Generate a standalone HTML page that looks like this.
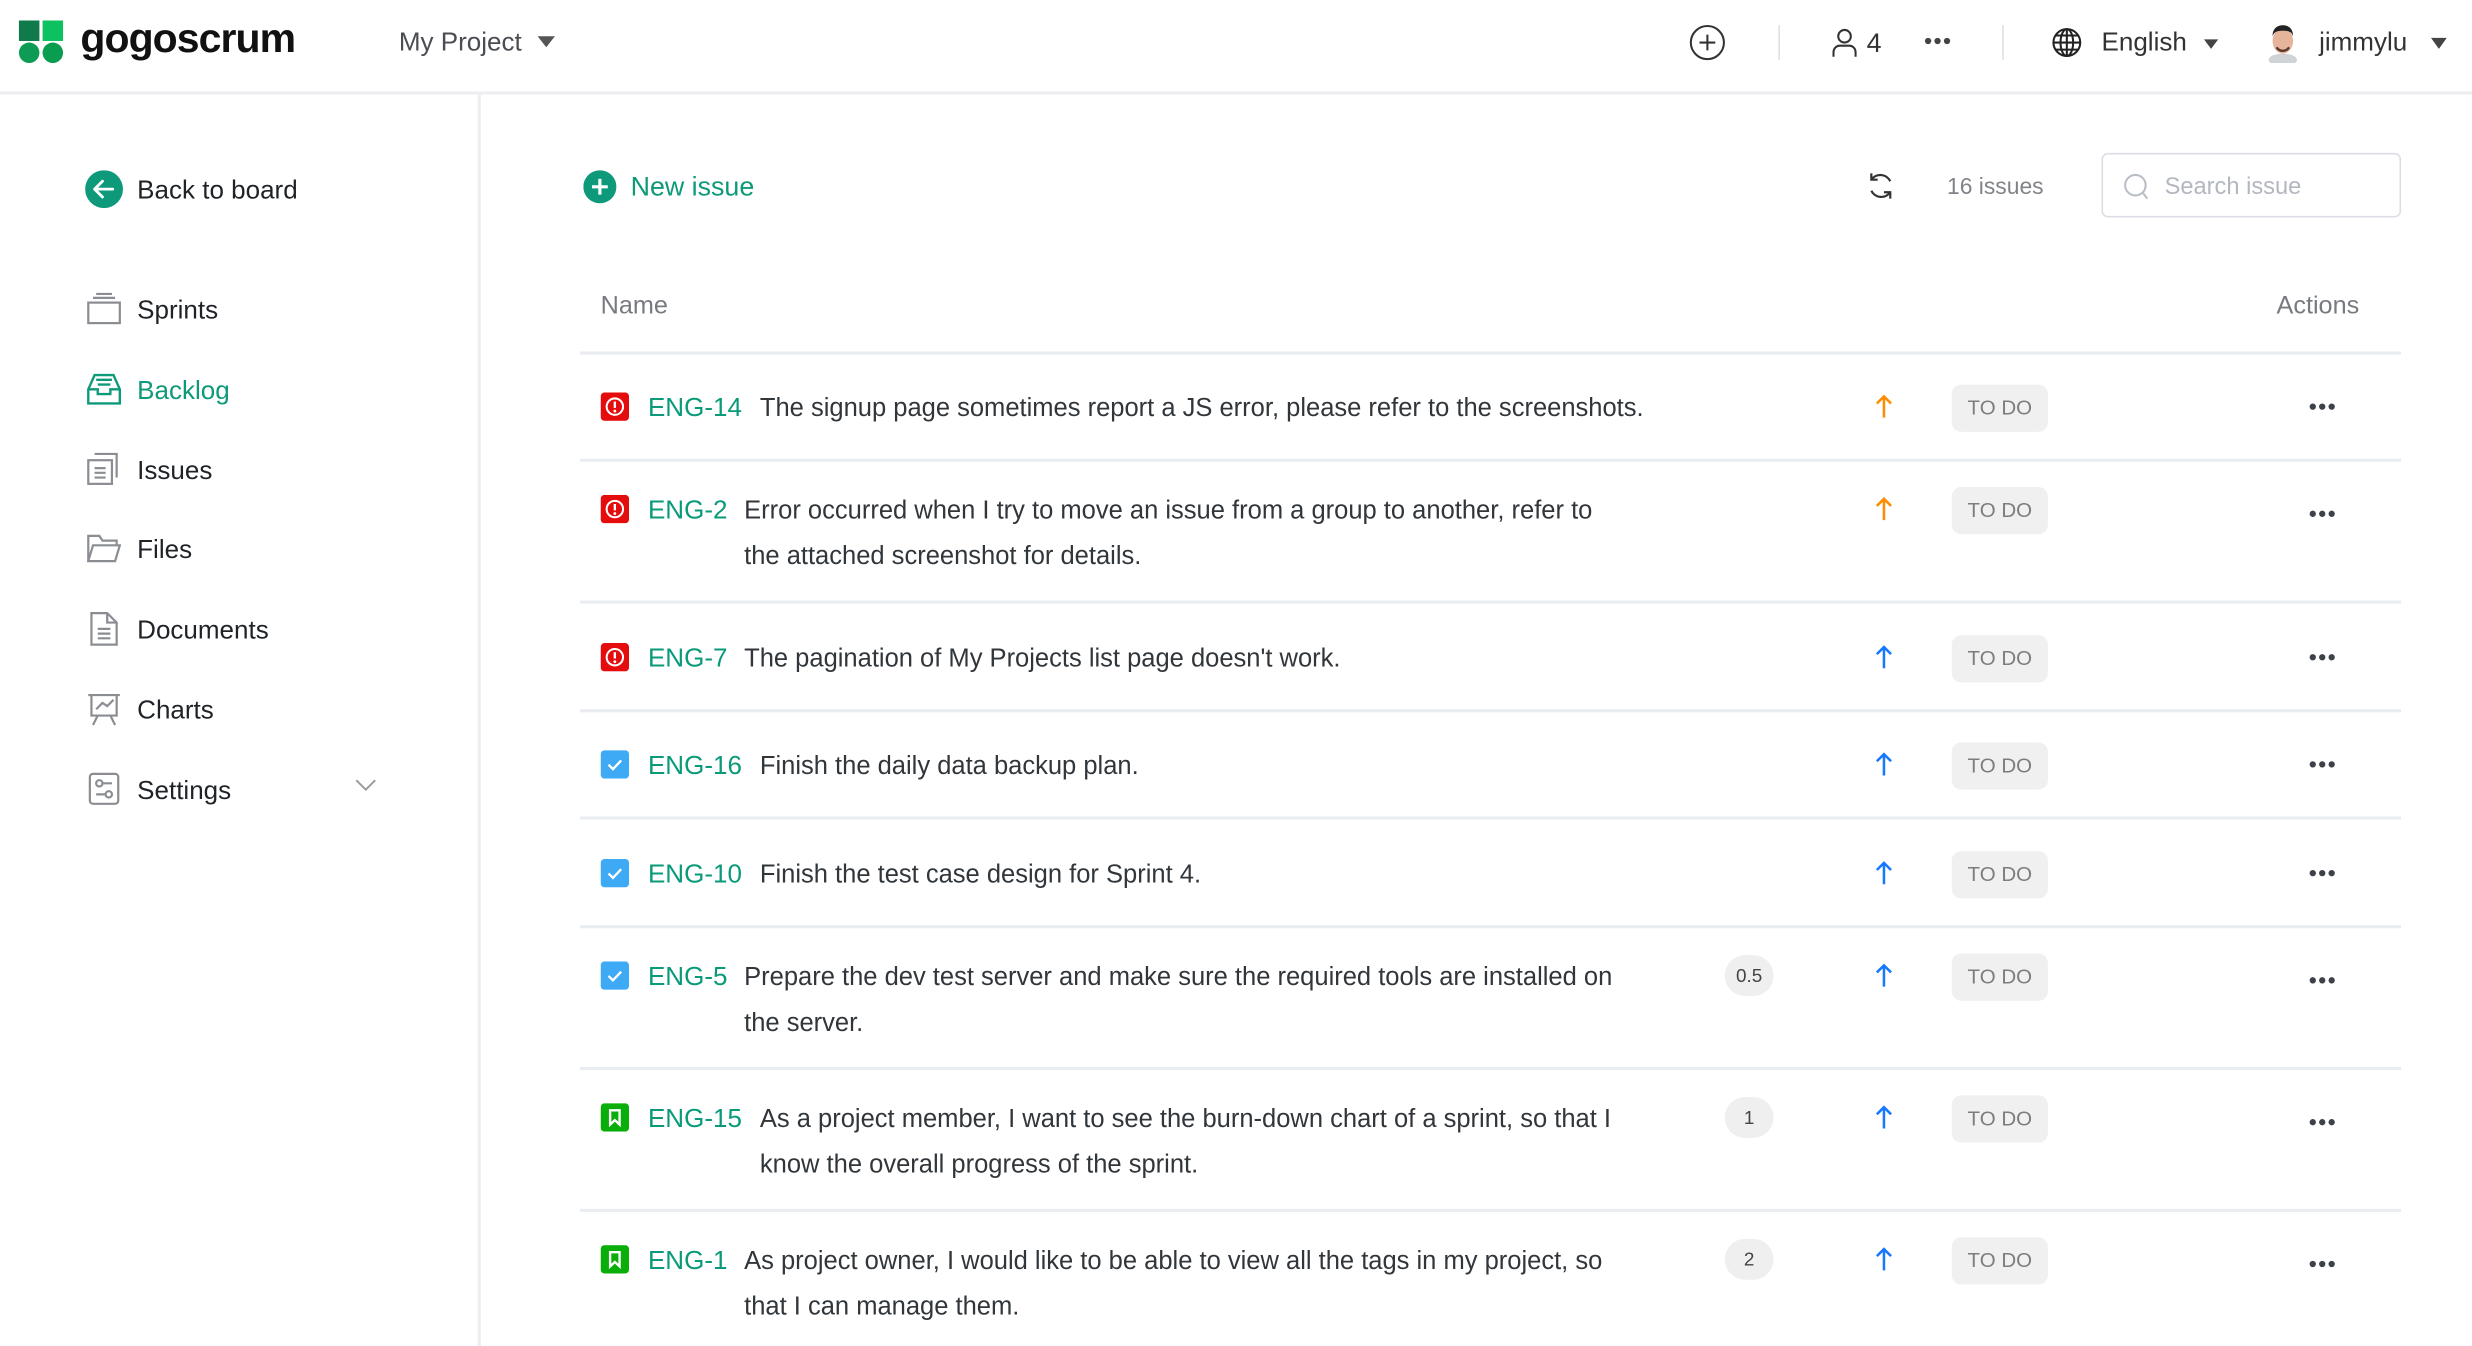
<!DOCTYPE html>
<html><head><meta charset="utf-8">
<style>
html,body{margin:0;padding:0;background:#fff;overflow:hidden;width:2472px;height:1346px}
#w{position:absolute;left:0;top:0;width:1568px;height:854px;transform:scale(1.57653,1.5761);transform-origin:0 0;font-family:"Liberation Sans",sans-serif;color:#2b2f33}
.a{position:absolute;white-space:nowrap}
.t{font-size:16.2px;line-height:29px;color:#31363b}
.id{font-size:16.5px;line-height:29px;color:#0a9a7a}
.hl{position:absolute;height:2px;background:#e9ecf0;left:368px;width:1155px}
.todo{position:absolute;left:1238px;width:61px;height:30px;border-radius:6px;background:#f0f0f0;color:#7d7d7d;font-size:13px;line-height:30px;text-align:center}
.dots{position:absolute;left:1464px;width:18px;height:10px}
.pt{position:absolute;left:1094px;width:31px;height:26px;border-radius:13px;background:#efefef;color:#444;font-size:12px;line-height:26px;text-align:center}
.nav{position:absolute;left:87px;font-size:16.5px;line-height:20px;color:#1f2327}
.ic{position:absolute;left:55px}
</style></head><body><div id="w">
<div style="position:absolute;left:0;top:58px;width:1568px;height:2px;background:#eceef1"></div>
<div class="a" style="left:12px;top:13px;width:13px;height:13px;background:#107a4b"></div>
<div class="a" style="left:27px;top:13px;width:13px;height:13px;background:#0cc15f"></div>
<div class="a" style="left:12px;top:27px;width:13px;height:13px;border-radius:50%;background:#0e9c55"></div>
<div class="a" style="left:27px;top:27px;width:13px;height:13px;border-radius:50%;background:#0a9c4f"></div>
<div class="a" style="left:51px;top:9px;font-size:26px;font-weight:bold;letter-spacing:-0.6px;color:#111">gogoscrum</div>
<div class="a" style="left:253px;top:18px;font-size:16.5px;color:#4a4d52">My Project</div>
<svg class="a" style="left:340px;top:22px" width="13" height="9"><path d="M1 1h11L6.5 8z" fill="#555"/></svg>
<svg class="a" style="left:1071px;top:15px" width="24" height="24"><circle cx="12" cy="12" r="10.5" fill="none" stroke="#333" stroke-width="1.3"/><path d="M12 7v10M7 12h10" stroke="#333" stroke-width="1.3"/></svg>
<div class="a" style="left:1128px;top:16px;width:1px;height:22px;background:#dde0e4"></div>
<svg class="a" style="left:1161px;top:17px" width="18" height="20"><circle cx="9" cy="6" r="4" fill="none" stroke="#333" stroke-width="1.3"/><path d="M2 19v-3a4 4 0 0 1 4-4h6a4 4 0 0 1 4 4v3" fill="none" stroke="#333" stroke-width="1.3"/></svg>
<div class="a" style="left:1184px;top:18px;font-size:17px;color:#333">4</div>
<svg class="a" style="left:1220px;top:22px" width="18" height="8"><circle cx="3" cy="4" r="2" fill="#444"/><circle cx="9" cy="4" r="2" fill="#444"/><circle cx="15" cy="4" r="2" fill="#444"/></svg>
<div class="a" style="left:1270px;top:16px;width:1px;height:22px;background:#dde0e4"></div>
<svg class="a" style="left:1301px;top:17px" width="20" height="20"><g fill="none" stroke="#222" stroke-width="1.3"><circle cx="10" cy="10" r="8.5"/><ellipse cx="10" cy="10" rx="4" ry="8.5"/><path d="M10 1.5v17M1.5 10h17M3 5.5h14M3 14.5h14"/></g></svg>
<div class="a" style="left:1333px;top:18px;font-size:16.5px;color:#333">English</div>
<svg class="a" style="left:1397px;top:24px" width="11" height="8"><path d="M1 1h9L5.5 7z" fill="#444"/></svg>
<svg class="a" style="left:1437px;top:14px" width="22" height="26"><ellipse cx="11" cy="24" rx="9" ry="4" fill="#cfd3d8"/><ellipse cx="11" cy="12" rx="6.5" ry="8" fill="#e6b49b"/><path d="M4.5 9c0-5 3-7 6.5-7s6.5 2 6.5 7c-1-3-3-3.5-6.5-3.5S5.5 6 4.5 9z" fill="#222"/><path d="M7 16c2 3 6 3 8 0" stroke="#5a3a2a" stroke-width="1.5" fill="none"/></svg>
<div class="a" style="left:1471px;top:18px;font-size:16.5px;color:#333">jimmylu</div>
<svg class="a" style="left:1541px;top:23px" width="12" height="9"><path d="M1 1h10L6 8z" fill="#444"/></svg>

<div style="position:absolute;left:303px;top:60px;width:2px;height:794px;background:#eceef1"></div>
<svg class="a" style="left:54px;top:108px" width="24" height="24"><circle cx="12" cy="12" r="12" fill="#0e9a7a"/><path d="M17.5 12h-11M11 7l-5 5 5 5" fill="none" stroke="#fff" stroke-width="1.8" stroke-linecap="round" stroke-linejoin="round"/></svg>
<div class="nav" style="top:111px">Back to board</div>

<svg class="ic" style="top:185px" width="22" height="21"><g fill="none" stroke="#8a8d92" stroke-width="1.4"><rect x="1" y="7" width="20" height="13"/><path d="M4 4h14M6 1.5h10"/></g></svg>
<div class="nav" style="top:187px">Sprints</div>
<svg class="ic" style="top:236px" width="22" height="21"><g fill="none" stroke="#0e9a7a" stroke-width="1.5"><path d="M1 11l4-9h12l4 9v9H1z"/><path d="M1 11h6v3h8v-3h6M6 5h10M7 8h8"/></g></svg>
<div class="nav" style="top:238px;color:#0e9a7a">Backlog</div>
<svg class="ic" style="top:287px" width="22" height="21"><g fill="none" stroke="#8a8d92" stroke-width="1.4"><rect x="1" y="5" width="15" height="15"/><path d="M5 1h14v15M5 10h7M5 13h7M5 16h7"/></g></svg>
<div class="nav" style="top:289px">Issues</div>
<svg class="ic" style="top:339px" width="22" height="19"><g fill="none" stroke="#8a8d92" stroke-width="1.4"><path d="M1 17V1h7l2 3h9v3"/><path d="M1 17l3-10h17l-3 10z"/></g></svg>
<div class="nav" style="top:339px">Files</div>
<svg class="ic" style="top:388px" width="22" height="22"><g fill="none" stroke="#8a8d92" stroke-width="1.4"><path d="M3 1h10l6 6v14H3z"/><path d="M13 1v6h6M7 11h8M7 14h8M7 17h8"/></g></svg>
<div class="nav" style="top:390px">Documents</div>
<svg class="ic" style="top:440px" width="22" height="21"><g fill="none" stroke="#8a8d92" stroke-width="1.4"><path d="M1 1h20M3 1v13h16V1M7 14l-3 6M15 14l3 6"/><path d="M6 10l4-4 3 2 4-4"/></g></svg>
<div class="nav" style="top:441px">Charts</div>
<svg class="ic" style="top:490px" width="22" height="22"><g fill="none" stroke="#8a8d92" stroke-width="1.4"><rect x="2" y="1" width="18" height="19" rx="2"/><circle cx="8" cy="7" r="2"/><circle cx="14" cy="14" r="2"/><path d="M10 7h6M6 14h6"/></g></svg>
<div class="nav" style="top:492px">Settings</div>
<svg class="a" style="left:225px;top:494px" width="14" height="8"><path d="M1 1l6 6 6-6" fill="none" stroke="#999" stroke-width="1.2"/></svg>

<svg class="a" style="left:370px;top:108px" width="21" height="21"><circle cx="10.5" cy="10.5" r="10.5" fill="#0e9a7a"/><path d="M10.5 5.5v10M5.5 10.5h10" stroke="#fff" stroke-width="2"/></svg>
<div class="a" style="left:400px;top:109px;font-size:17px;color:#0e9a7a">New issue</div>
<svg class="a" style="left:1184px;top:109px" width="18" height="18"><g fill="none" stroke="#333" stroke-width="1.4"><path d="M15 6A7 7 0 0 0 3 5M3 12a7 7 0 0 0 12 1"/><path d="M3 1v4h4M15 17v-4h-4"/></g></svg>
<div class="a" style="left:1235px;top:111px;font-size:14.5px;color:#808489">16 issues</div>
<div class="a" style="left:1333px;top:97px;width:188px;height:39px;border:1.5px solid #dcdee6;border-radius:4px"></div>
<svg class="a" style="left:1347px;top:110px" width="16" height="17"><circle cx="7.5" cy="7.5" r="6.5" fill="none" stroke="#b9bdc5" stroke-width="1.3"/><path d="M12 12l3 4" stroke="#b9bdc5" stroke-width="1.3"/></svg>
<div class="a" style="left:1373px;top:110px;font-size:15px;color:#b3b7bf">Search issue</div>

<div class="a" style="left:381px;top:186px;font-size:16px;color:#777b80">Name</div>
<div class="a" style="left:1444px;top:186px;font-size:16px;color:#777b80">Actions</div>
<div class="hl" style="top:223px"></div>
<div class="hl" style="top:291px"></div>
<div class="hl" style="top:381px"></div>
<div class="hl" style="top:450px"></div>
<div class="hl" style="top:518px"></div>
<div class="hl" style="top:587px"></div>
<div class="hl" style="top:677px"></div>
<div class="hl" style="top:767px"></div>

<div id="rows"></div>
<script>
var R=[
[258,'b','ENG-14',482,['The signup page sometimes report a JS error, please refer to the screenshots.'],null,'#ff8c00'],
[323,'b','ENG-2',472,['Error occurred when I try to move an issue from a group to another, refer to','the attached screenshot for details.'],null,'#ff8c00'],
[417,'b','ENG-7',472,["The pagination of My Projects list page doesn't work."],null,'#1677ff'],
[485,'t','ENG-16',482,['Finish the daily data backup plan.'],null,'#1677ff'],
[554,'t','ENG-10',482,['Finish the test case design for Sprint 4.'],null,'#1677ff'],
[619,'t','ENG-5',472,['Prepare the dev test server and make sure the required tools are installed on','the server.'],'0.5','#1677ff'],
[709,'s','ENG-15',482,['As a project member, I want to see the burn-down chart of a sprint, so that I','know the overall progress of the sprint.'],'1','#1677ff'],
[799,'s','ENG-1',472,['As project owner, I would like to be able to view all the tags in my project, so','that I can manage them.'],'2','#1677ff']];
var h='';
R.forEach(function(r){var y=r[0];
var ic='';
if(r[1]=='b')ic='<rect width="18" height="18" rx="2.5" fill="#e40c0c"/><circle cx="9" cy="9" r="5.2" fill="none" stroke="#fff" stroke-width="1.3"/><path d="M9 5.8v4" stroke="#fff" stroke-width="1.5"/><circle cx="9" cy="11.8" r="0.9" fill="#fff"/>';
else if(r[1]=='t')ic='<rect width="18" height="18" rx="2.5" fill="#3ea9f5"/><path d="M5 9.2l2.8 2.8L13 6.5" fill="none" stroke="#fff" stroke-width="1.5"/>';
else ic='<rect width="18" height="18" rx="2.5" fill="#0aae0a"/><path d="M6 4.5h6v9l-3-2.8-3 2.8z" fill="none" stroke="#fff" stroke-width="1.5"/>';
h+='<svg class="a" style="left:381px;top:'+(y-9)+'px" width="18" height="18">'+ic+'</svg>';
h+='<div class="a id" style="left:411px;top:'+(y-13)+'px">'+r[2]+'</div>';
r[4].forEach(function(l,i){h+='<div class="a t" style="left:'+r[3]+'px;top:'+(y-13+i*29)+'px">'+l+'</div>';});
if(r[5])h+='<div class="pt" style="top:'+(y-13)+'px">'+r[5]+'</div>';
h+='<svg class="a" style="left:1189px;top:'+(y-8)+'px" width="12" height="16"><path d="M6 15V1.5M1.5 6L6 1.5 10.5 6" fill="none" stroke="'+r[6]+'" stroke-width="1.6"/></svg>';
h+='<div class="todo" style="top:'+(y-14)+'px">TO DO</div>';
var dy=r[4].length>1?3:0;
h+='<svg class="dots" style="top:'+(y-5+dy)+'px" viewBox="0 0 18 10"><circle cx="3" cy="5" r="2" fill="#3d4149"/><circle cx="9" cy="5" r="2" fill="#3d4149"/><circle cx="15" cy="5" r="2" fill="#3d4149"/></svg>';
});
document.getElementById('rows').innerHTML=h;
</script>
</div></body></html>
